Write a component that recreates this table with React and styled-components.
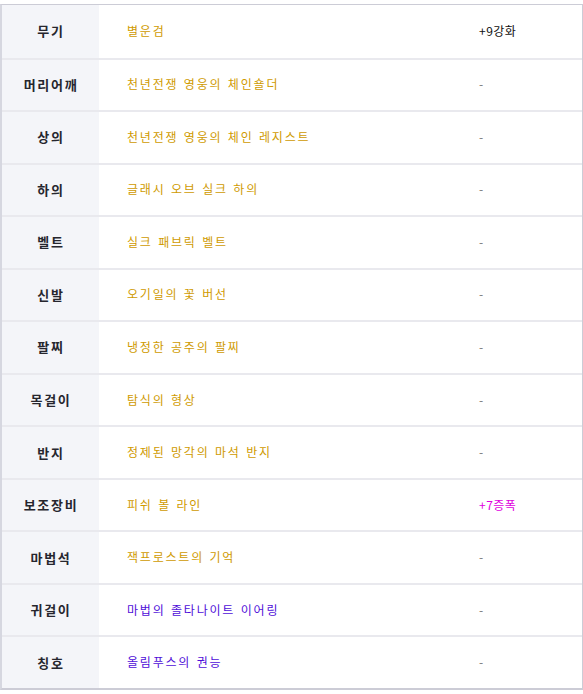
import React from "react";
import styled, { createGlobalStyle } from "styled-components";

const Global = createGlobalStyle`
  html, body { margin: 0; padding: 0; background: #ffffff; }
  body { font-family: "Noto Sans CJK KR", "Noto Sans", sans-serif; }
`;

const Page = styled.div`
  padding-top: 4px;
  width: 583px;
`;

const Table = styled.div`
  display: grid;
  grid-template-columns: 97px 380px 1fr;
  grid-template-rows: repeat(13, 1fr);
  height: 686px;
  border: 1px solid #ccccd6;
  border-left: 2px solid #d6d7e0;
  border-bottom: 2px solid #ccccd6;
  box-sizing: border-box;
`;

const Row = styled.div`
  display: contents;
`;

const Cell = styled.div`
  display: flex;
  align-items: center;
  border-top: ${(p) => (p.$first ? "none" : "2px solid #e9e9ee")};
  box-sizing: border-box;
  font-size: 12px;
  line-height: 1;
  padding-bottom: 1px;
`;

const Label = styled(Cell)`
  justify-content: center;
  background: #f4f5f9;
  color: #26262e;
  font-weight: 700;
  font-size: 13px;
  letter-spacing: 1.7px;
  padding-left: 1px;
`;

const Name = styled(Cell)`
  padding-left: 28px;
  color: ${(p) => p.$color};
  letter-spacing: 1.8px;
  word-spacing: 1px;
`;

const Value = styled(Cell)`
  color: ${(p) => p.$color};
  letter-spacing: 0.5px;
`;

const GOLD = "#cf9a00";
const PURPLE = "#4f0fd8";

const rows = [
  { label: "무기", name: "별운검", color: GOLD, value: "+9강화", vColor: "#111111" },
  { label: "머리어깨", name: "천년전쟁 영웅의 체인숄더", color: GOLD },
  { label: "상의", name: "천년전쟁 영웅의 체인 레지스트", color: GOLD },
  { label: "하의", name: "글래시 오브 실크 하의", color: GOLD },
  { label: "벨트", name: "실크 패브릭 벨트", color: GOLD },
  { label: "신발", name: "오기일의 꽃 버선", color: GOLD },
  { label: "팔찌", name: "냉정한 공주의 팔찌", color: GOLD },
  { label: "목걸이", name: "탐식의 형상", color: GOLD },
  { label: "반지", name: "정제된 망각의 마석 반지", color: GOLD },
  { label: "보조장비", name: "피쉬 볼 라인", color: GOLD, value: "+7증폭", vColor: "#e000e0" },
  { label: "마법석", name: "잭프로스트의 기억", color: GOLD },
  { label: "귀걸이", name: "마법의 졸타나이트 이어링", color: PURPLE },
  { label: "칭호", name: "올림푸스의 권능", color: PURPLE },
];

export default function App() {
  return (
    <>
      <Global />
      <Page>
        <Table>
          {rows.map((r, i) => (
            <Row key={r.label}>
              <Label $first={i === 0}>{r.label}</Label>
              <Name $first={i === 0} $color={r.color}>{r.name}</Name>
              <Value $first={i === 0} $color={r.value ? r.vColor : "#777777"}>
                {r.value || "-"}
              </Value>
            </Row>
          ))}
        </Table>
      </Page>
    </>
  );
}
